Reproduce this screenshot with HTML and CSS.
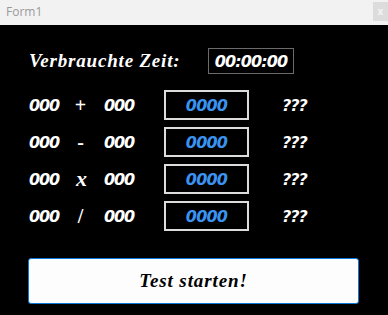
FILE: index.html
```html
<!DOCTYPE html>
<html lang="de">
<head>
<meta charset="utf-8">
<title>Form1</title>
<link rel="stylesheet" href="styles.css">
</head>
<body>
<div class="window">
  <div class="titlebar">
    <span class="title">Form1</span>
    <span class="close">x</span>
  </div>
  <div class="client">
    <div class="timer-row">
      <span class="label">Verbrauchte Zeit:</span>
      <span class="timer">00:00:00</span>
    </div>
    <div class="tasks">
      <div class="task">
        <span class="num">000</span><span class="op">+</span><span class="num">000</span>
        <span class="answer">0000</span><span class="result">???</span>
      </div>
      <div class="task">
        <span class="num">000</span><span class="op">-</span><span class="num">000</span>
        <span class="answer">0000</span><span class="result">???</span>
      </div>
      <div class="task">
        <span class="num">000</span><span class="op op-x">x</span><span class="num">000</span>
        <span class="answer">0000</span><span class="result">???</span>
      </div>
      <div class="task">
        <span class="num">000</span><span class="op">/</span><span class="num">000</span>
        <span class="answer">0000</span><span class="result">???</span>
      </div>
    </div>
    <button class="start">Test starten!</button>
  </div>
</div>
</body>
</html>
```

FILE: styles.css
```css
html, body {
  margin: 0;
  padding: 0;
}
body {
  width: 388px;
  height: 315px;
  overflow: hidden;
  background: #000;
}
.window {
  display: flex;
  flex-direction: column;
  height: 315px;
}
.titlebar {
  height: 25px;
  background: #f2f2f2;
  display: flex;
  align-items: center;
  justify-content: space-between;
  font-family: "Open Sans", "Noto Sans", sans-serif;
}
.title {
  color: #9a9a9a;
  font-size: 12px;
  padding-left: 6px;
  padding-bottom: 2px;
}
.close {
  width: 15px;
  height: 19px;
  margin-top: -3px;
  background: #dcdcdc;
  color: #f4f4f4;
  font-size: 10px;
  font-weight: bold;
  display: flex;
  align-items: center;
  justify-content: center;
}
.client {
  flex: 1;
  background: #000;
  padding: 23px 0 0 29px;
}
.timer-row {
  display: flex;
  align-items: center;
  height: 26px;
}
.label {
  width: 179px;
  color: #fff;
  font-family: "Liberation Serif", serif;
  font-style: italic;
  font-weight: bold;
  font-size: 19px;
  letter-spacing: 0.8px;
  white-space: nowrap;
}
.timer {
  box-sizing: border-box;
  width: 86px;
  height: 26px;
  border: 1px solid #6b6b6b;
  color: #fff;
  font-family: "DejaVu Sans", sans-serif;
  font-style: italic;
  font-weight: bold;
  font-size: 16px;
  letter-spacing: -0.9px;
  display: flex;
  align-items: center;
  justify-content: center;
}
.tasks {
  margin-top: 16px;
  display: flex;
  flex-direction: column;
  gap: 7px;
}
.task {
  display: flex;
  align-items: center;
  height: 30px;
  color: #fff;
  font-family: "DejaVu Sans", sans-serif;
  font-style: italic;
  font-weight: bold;
  font-size: 16px;
}
.num {
  width: 30px;
  letter-spacing: -1.1px;
  white-space: nowrap;
}
.op {
  width: 45px;
  text-align: center;
  font-family: "Liberation Serif", serif;
  font-style: normal;
  font-weight: bold;
  font-size: 20px;
  padding-right: 2px;
  box-sizing: border-box;
}
.op-x {
  font-style: italic;
  font-size: 22px;
  padding-right: 0;
}
.answer {
  box-sizing: border-box;
  width: 85px;
  height: 30px;
  margin-left: 30px;
  border: 2px solid #dcdcdc;
  color: #3a93f0;
  letter-spacing: -0.8px;
  display: flex;
  align-items: center;
  justify-content: center;
}
.result {
  margin-left: 33px;
  letter-spacing: -1px;
}
.start {
  display: flex;
  align-items: center;
  justify-content: center;
  box-sizing: border-box;
  width: 331px;
  height: 46px;
  margin: 27px 0 0 -1px;
  padding: 0;
  background: #fdfdfd;
  border: 1px solid #0a78d7;
  border-radius: 3px;
  color: #000;
  font-family: "Liberation Serif", serif;
  font-style: italic;
  font-weight: bold;
  font-size: 19px;
  letter-spacing: 0.9px;
}
```
